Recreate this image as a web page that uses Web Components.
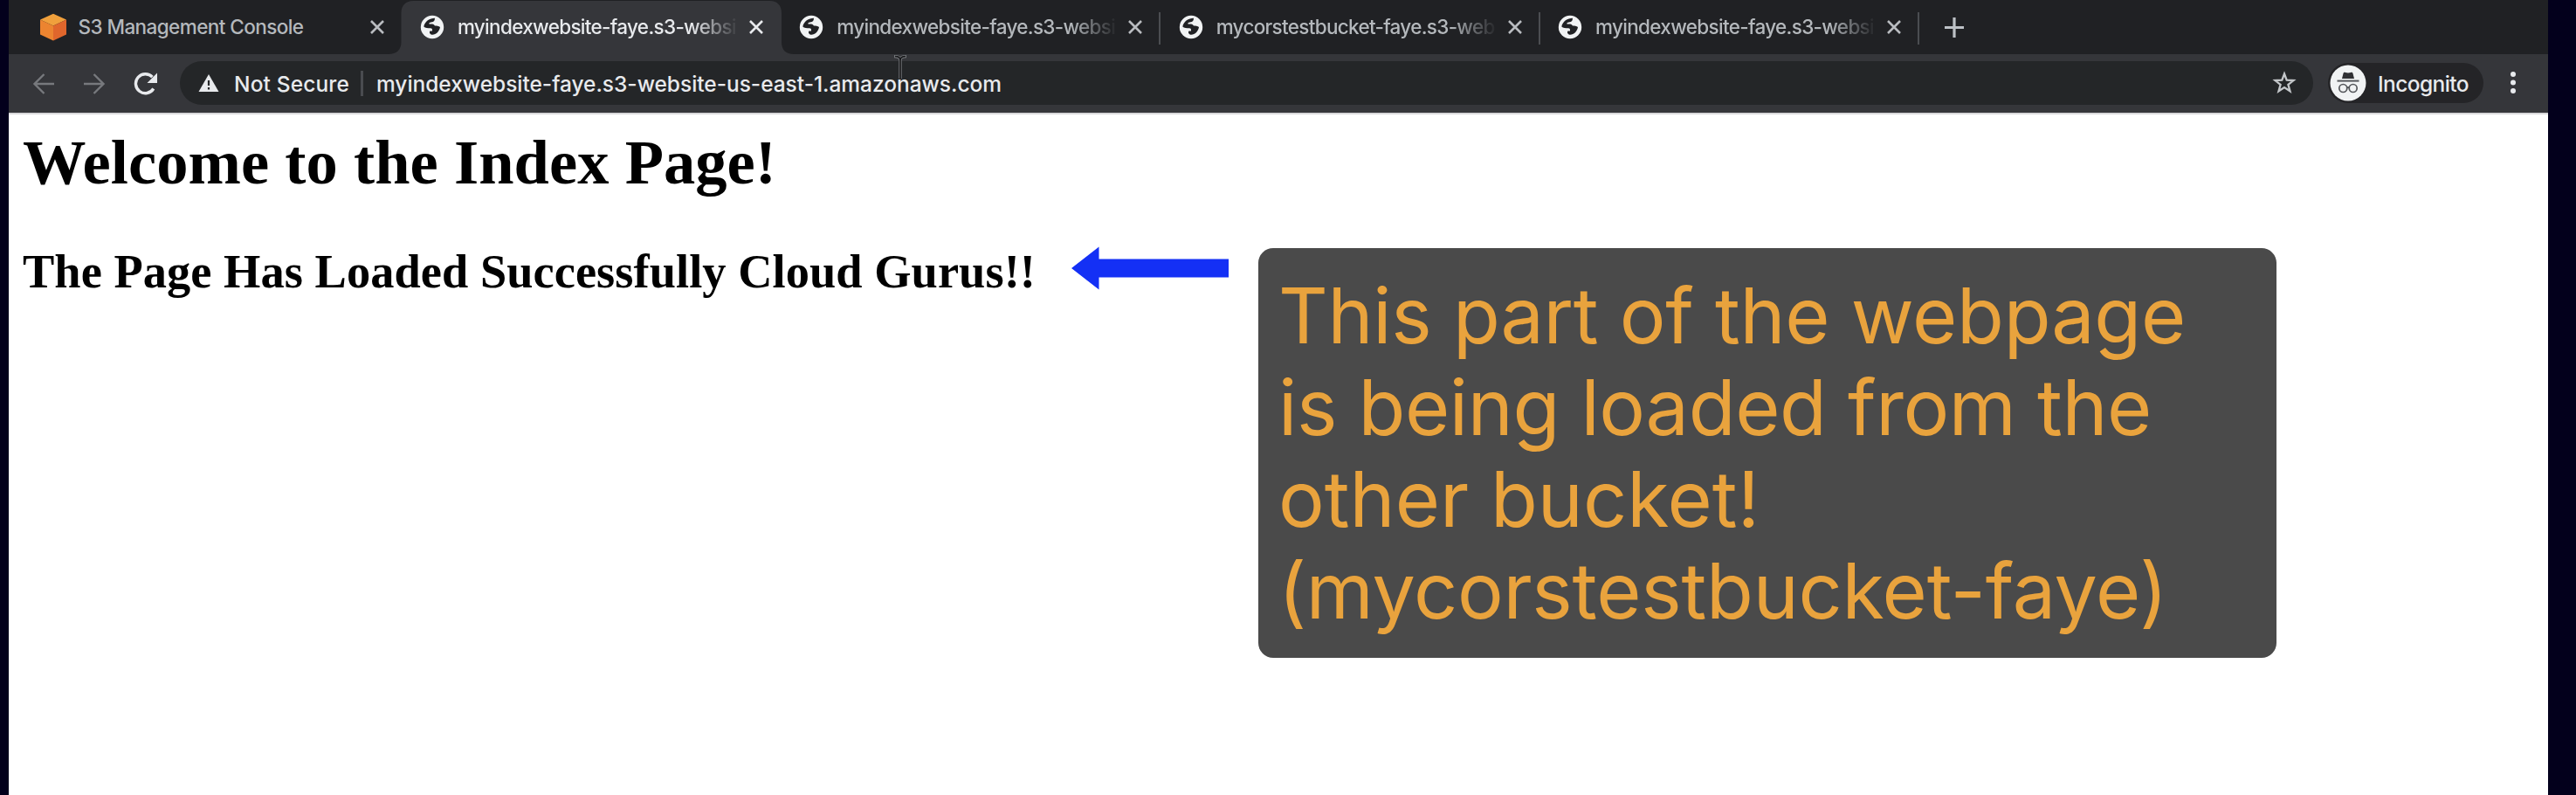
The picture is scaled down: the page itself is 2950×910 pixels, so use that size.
<!DOCTYPE html>
<html lang="en">
<head>
<meta charset="utf-8">
<title>myindexwebsite-faye.s3-website-us-east-1.amazonaws.com</title>
<style>
  html, body { margin: 0; padding: 0; background: #03001c; }
  body { width: 2950px; height: 910px; overflow: hidden; }
</style>
</head>
<body>
<browser-window></browser-window>
<script>
/* A single line of text whose tracking is adjusted to fill a given width. */
customElements.define('fit-text', class extends HTMLElement {
  connectedCallback() {
    const root = this.attachShadow({ mode: 'open' });
    root.innerHTML = `<style>
      :host { display: block; white-space: nowrap; }
      span { display: inline-block; }
    </style><span><slot></slot></span>`;
    const span = root.querySelector('span');
    const natural = span.getBoundingClientRect().width;
    const want = Number(this.getAttribute('w'));
    const n = this.textContent.length;
    if (natural && want) span.style.letterSpacing = ((want - natural) / n).toFixed(3) + 'px';
  }
});

customElements.define('globe-icon', class extends HTMLElement {
  connectedCallback() {
    this.attachShadow({ mode: 'open' }).innerHTML = `<style>
      :host { display: block; width: 28px; height: 28px; }
      svg { display: block; }
    </style>
    <svg width="28" height="28" viewBox="0 0 28 28">
      <circle cx="14" cy="14" r="13.2" fill="#f1f3f4"/>
      <path d="M17 3.800C11 3.800 5.500 7.500 4.300 13.500C6 15 9 15.200 12 15.200C13.500 15.200 14 16 14 17.500L14 18.500H11.500C10.300 20 11.300 22.300 13.500 22.700C18 23.200 22.300 19 23 14C21.500 12.600 19 12.600 17 12.500C16 10.800 14.500 10.600 12.500 10.600H10.500C10 8.800 12 8.600 14 8.300C15.800 8 17 6.500 17 3.800z" fill="#202124"/>
    </svg>`;
  }
});

customElements.define('cube-icon', class extends HTMLElement {
  connectedCallback() {
    this.attachShadow({ mode: 'open' }).innerHTML = `<style>
      :host { display: block; width: 32px; height: 32px; }
      svg { display: block; }
    </style>
    <svg width="32" height="32" viewBox="0 0 32 32">
      <path d="M16 .8 31 7.600 16 14.500 1 7.600z" fill="#f0a03c"/>
      <path d="M1 7.600 16 14.500V31.500L1 24.600z" fill="#ec8430"/>
      <path d="M31 7.600 16 14.500V31.500L31 24.600z" fill="#e0662c"/>
    </svg>`;
  }
});

customElements.define('browser-tab', class extends HTMLElement {
  connectedCallback() {
    const on = this.hasAttribute('active');
    const c = on ? '#e8eaed' : '#b4b8bc';
    this.attachShadow({ mode: 'open' }).innerHTML = `<style>
      :host { display: block; box-sizing: border-box; flex: 0 0 434.4px; height: 62px; position: relative; color: ${c}; font: 500 22.5px/28px Inter, "Liberation Sans", sans-serif; }
      .shape { display: ${on ? 'block' : 'none'}; position: absolute; left: -16px; top: 0; }
      .row { position: relative; display: grid; grid-template-columns: 63px 319px 46px 6px; height: 62px; align-items: center; }
      .icon { display: flex; justify-content: center; width: 68px; }
      .label { overflow: hidden; ${this.hasAttribute('fade') ? '-webkit-mask-image: linear-gradient(90deg,#000 0 268px,transparent 322px);' : ''} }
      .x { justify-self: center; display: block; margin-right: 0; }
      i { display: ${this.hasAttribute('sep') ? 'block' : 'none'}; width: 2px; height: 37px; background: #4b4d51; justify-self: end; margin-top: 2px; }
    </style>
    <svg class="shape" width="467" height="62" viewBox="0 0 467 62"><path d="M0 62C9 62 14.500 57 14.500 48V15C14.500 6 20 1 28 1H437C445 1 450 6 450 15V48C450 57 455 62 464 62z" fill="#35363a"/></svg>
    <div class="row">
      <div class="icon"><slot name="icon"></slot></div>
      <div class="label"><slot></slot></div>
      <svg class="x" width="18" height="18" viewBox="0 0 18 18"><path d="M2 2 16 16M16 2 2 16" stroke="${on ? '#e8eaed' : '#b9bcc0'}" stroke-width="2.600" fill="none"/></svg>
      <i></i>
    </div>`;
  }
});

customElements.define('tab-strip', class extends HTMLElement {
  connectedCallback() {
    this.attachShadow({ mode: 'open' }).innerHTML = `<style>
      :host { display: flex; height: 62px; padding-left: 16.5px; background: #202124; }
      .plus { display: block; margin: 20px 0 0 29px; }
    </style>
    <browser-tab><cube-icon slot="icon"></cube-icon><fit-text w="258">S3 Management Console</fit-text></browser-tab>
    <browser-tab active fade><globe-icon slot="icon"></globe-icon><fit-text w="319">myindexwebsite-faye.s3-websi</fit-text></browser-tab>
    <browser-tab fade sep><globe-icon slot="icon"></globe-icon><fit-text w="319">myindexwebsite-faye.s3-websi</fit-text></browser-tab>
    <browser-tab fade sep><globe-icon slot="icon"></globe-icon><fit-text w="319">mycorstestbucket-faye.s3-web</fit-text></browser-tab>
    <browser-tab fade sep><globe-icon slot="icon"></globe-icon><fit-text w="319">myindexwebsite-faye.s3-websi</fit-text></browser-tab>
    <svg class="plus" width="22" height="23" viewBox="0 0 22 23"><path d="M11 0V23M0 11.500H22" stroke="#bdc1c6" stroke-width="3.200"/></svg>`;
  }
});

customElements.define('nav-bar', class extends HTMLElement {
  connectedCallback() {
    this.attachShadow({ mode: 'open' }).innerHTML = `<style>
      :host { display: flex; align-items: center; box-sizing: border-box; height: 67px; padding-bottom: 1px; background: #35363a; font: 500 24.5px/30px Inter, "Liberation Sans", sans-serif; color: #e8eaed; }
      svg { display: block; flex: none; }
      .nav { display: grid; grid-template-columns: 58px 58px 80px; width: 196px; padding-top: 1px; }
      .back { margin-left: 27px; } .fwd { margin-left: 27px; } .reload { margin-left: 27px; }
      .omni { display: flex; align-items: center; box-sizing: border-box; width: 2443px; height: 50px; border-radius: 25px; background: #242628; padding: 0 19px 0 21px; }
      .omni fit-text { margin-top: 1px; }
      .ns { margin-left: 17px; width: 145px; }
      .bar { width: 3px; height: 29px; background: #4a4c50; margin-right: 15px; }
      .url { flex: 1; }
      .pill { display: flex; align-items: center; box-sizing: border-box; width: 178px; height: 46px; border-radius: 23px; background: #242427; margin-left: 17px; padding-left: 2px; }
      .pill fit-text { margin: 1px 0 0 13px; }
      .dots { margin-left: 31px; }
    </style>
    <div class="nav">
      <svg class="back" width="26" height="26" viewBox="0 0 26 26"><path d="M25 13H3M13.500 2 2.500 13 13.500 24" fill="none" stroke="#77797d" stroke-width="2.400"/></svg>
      <svg class="fwd" width="26" height="26" viewBox="0 0 26 26"><path d="M1 13H23M12.500 2 23.500 13 12.500 24" fill="none" stroke="#77797d" stroke-width="2.400"/></svg>
      <svg class="reload" width="28" height="26" viewBox="0 0 28 26"><path d="M22.800 18.500A11 11 0 1 1 21.500 5.200" fill="none" stroke="#e8eaed" stroke-width="3.400"/><path d="M27 .5V12H15.500z" fill="#e8eaed"/></svg>
    </div>
    <div class="omni">
      <svg width="24" height="20" viewBox="0 0 24 20"><path d="M12 0 23.500 20H.5z" fill="#e8eaed"/><path d="M12 7V13M12 15V17.500" stroke="#242628" stroke-width="2.200"/></svg>
      <fit-text class="ns" w="132">Not Secure</fit-text>
      <div class="bar"></div>
      <fit-text class="url" w="716">myindexwebsite-faye.s3-website-us-east-1.amazonaws.com</fit-text>
      <svg width="28" height="28" viewBox="0 0 28 28"><path d="M14 3.500 16.700 10.700 24.500 11.100 18.400 15.900 20.500 23.300 14 19.100 7.500 23.300 9.600 15.900 3.500 11.100 11.300 10.700z" fill="none" stroke="#c4c7ca" stroke-width="2.300"/></svg>
    </div>
    <div class="pill">
      <svg width="42" height="42" viewBox="0 0 42 42"><circle cx="21" cy="21" r="20.500" fill="#f1f3f4"/>
        <path d="M14 16 15.500 10C16 8.500 17 8.500 18 9L21 9.600 24 9C25 8.500 26 8.500 26.500 10L28 16z" fill="#303134"/>
        <path d="M8.500 18.600H33.500" stroke="#55575b" stroke-width="2"/>
        <circle cx="15.300" cy="27" r="4.500" fill="none" stroke="#55575b" stroke-width="1.700"/><circle cx="26.700" cy="27" r="4.500" fill="none" stroke="#55575b" stroke-width="1.700"/><path d="M19.800 26.500q1.200-1 2.400 0" fill="none" stroke="#55575b" stroke-width="1.700"/></svg>
      <fit-text w="104">Incognito</fit-text>
    </div>
    <svg class="dots" width="6" height="26" viewBox="0 0 6 26"><circle cx="3" cy="3" r="3" fill="#e8eaed"/><circle cx="3" cy="12.500" r="3" fill="#e8eaed"/><circle cx="3" cy="22" r="3" fill="#e8eaed"/></svg>`;
  }
});

customElements.define('note-card', class extends HTMLElement {
  connectedCallback() {
    this.attachShadow({ mode: 'open' }).innerHTML = `<style>
      :host { display: block; box-sizing: border-box; width: 1166px; height: 469px; border-radius: 17px; background: #4a4a4a; padding: 24.500px 0 0 23px; color: #e9a33d; font: 400 88px/105.300px Inter, "Liberation Sans", sans-serif; }
    </style><slot></slot>`;
  }
});

customElements.define('index-page', class extends HTMLElement {
  connectedCallback() {
    this.attachShadow({ mode: 'open' }).innerHTML = `<style>
      :host { display: flex; align-items: flex-start; box-sizing: border-box; height: 781px; background: #fff; border-top: 2px solid #d8d8da; padding-left: 16px; color: #000; font-family: "Liberation Serif", serif; }
      .copy { width: 1191px; }
      h1, h2 { margin: 0; font-weight: 700; }
      h1 { font-size: 72.500px; line-height: 88px; margin-top: 11px; }
      h2 { font-size: 54.400px; line-height: 66px; margin-top: 48px; }
      .arrow { display: block; margin: 151px 34px 0 10px; flex: none; }
      note-card { margin-top: 153px; }
    </style>
    <div class="copy">
      <h1><fit-text w="863">Welcome to the Index Page!</fit-text></h1>
      <h2><fit-text w="1160">The Page Has Loaded Successfully Cloud Gurus!!</fit-text></h2>
    </div>
    <svg class="arrow" width="180" height="50" viewBox="0 0 180 50"><path d="M0 25 31.500 .5V14.500H180V35.500H31.500V49.500z" fill="#1430f5"/></svg>
    <note-card>
      <fit-text w="1039">This part of the webpage</fit-text>
      <fit-text w="1000">is being loaded from the</fit-text>
      <fit-text w="551">other bucket!</fit-text>
      <fit-text w="1018">(mycorstestbucket-faye)</fit-text>
    </note-card>`;
  }
});

customElements.define('browser-window', class extends HTMLElement {
  connectedCallback() {
    this.attachShadow({ mode: 'open' }).innerHTML = `<style>
      :host { display: block; position: relative; width: 2908px; height: 910px; margin-left: 10px; overflow: hidden; }
      .cursor { position: absolute; left: 1013px; top: 63px; }
    </style>
    <tab-strip></tab-strip>
    <nav-bar></nav-bar>
    <index-page></index-page>
    <svg class="cursor" width="16" height="28" viewBox="0 0 16 28"><path d="M1 1.500Q8 1.500 8 6Q8 1.500 15 1.500M8 5V27" fill="none" stroke="#74767a" stroke-width="3.400"/><path d="M2 1.500Q8 1.500 8 6Q8 1.500 14 1.500M8 5V27" fill="none" stroke="#17181a" stroke-width="1.600"/></svg>`;
  }
});
</script>
</body>
</html>
